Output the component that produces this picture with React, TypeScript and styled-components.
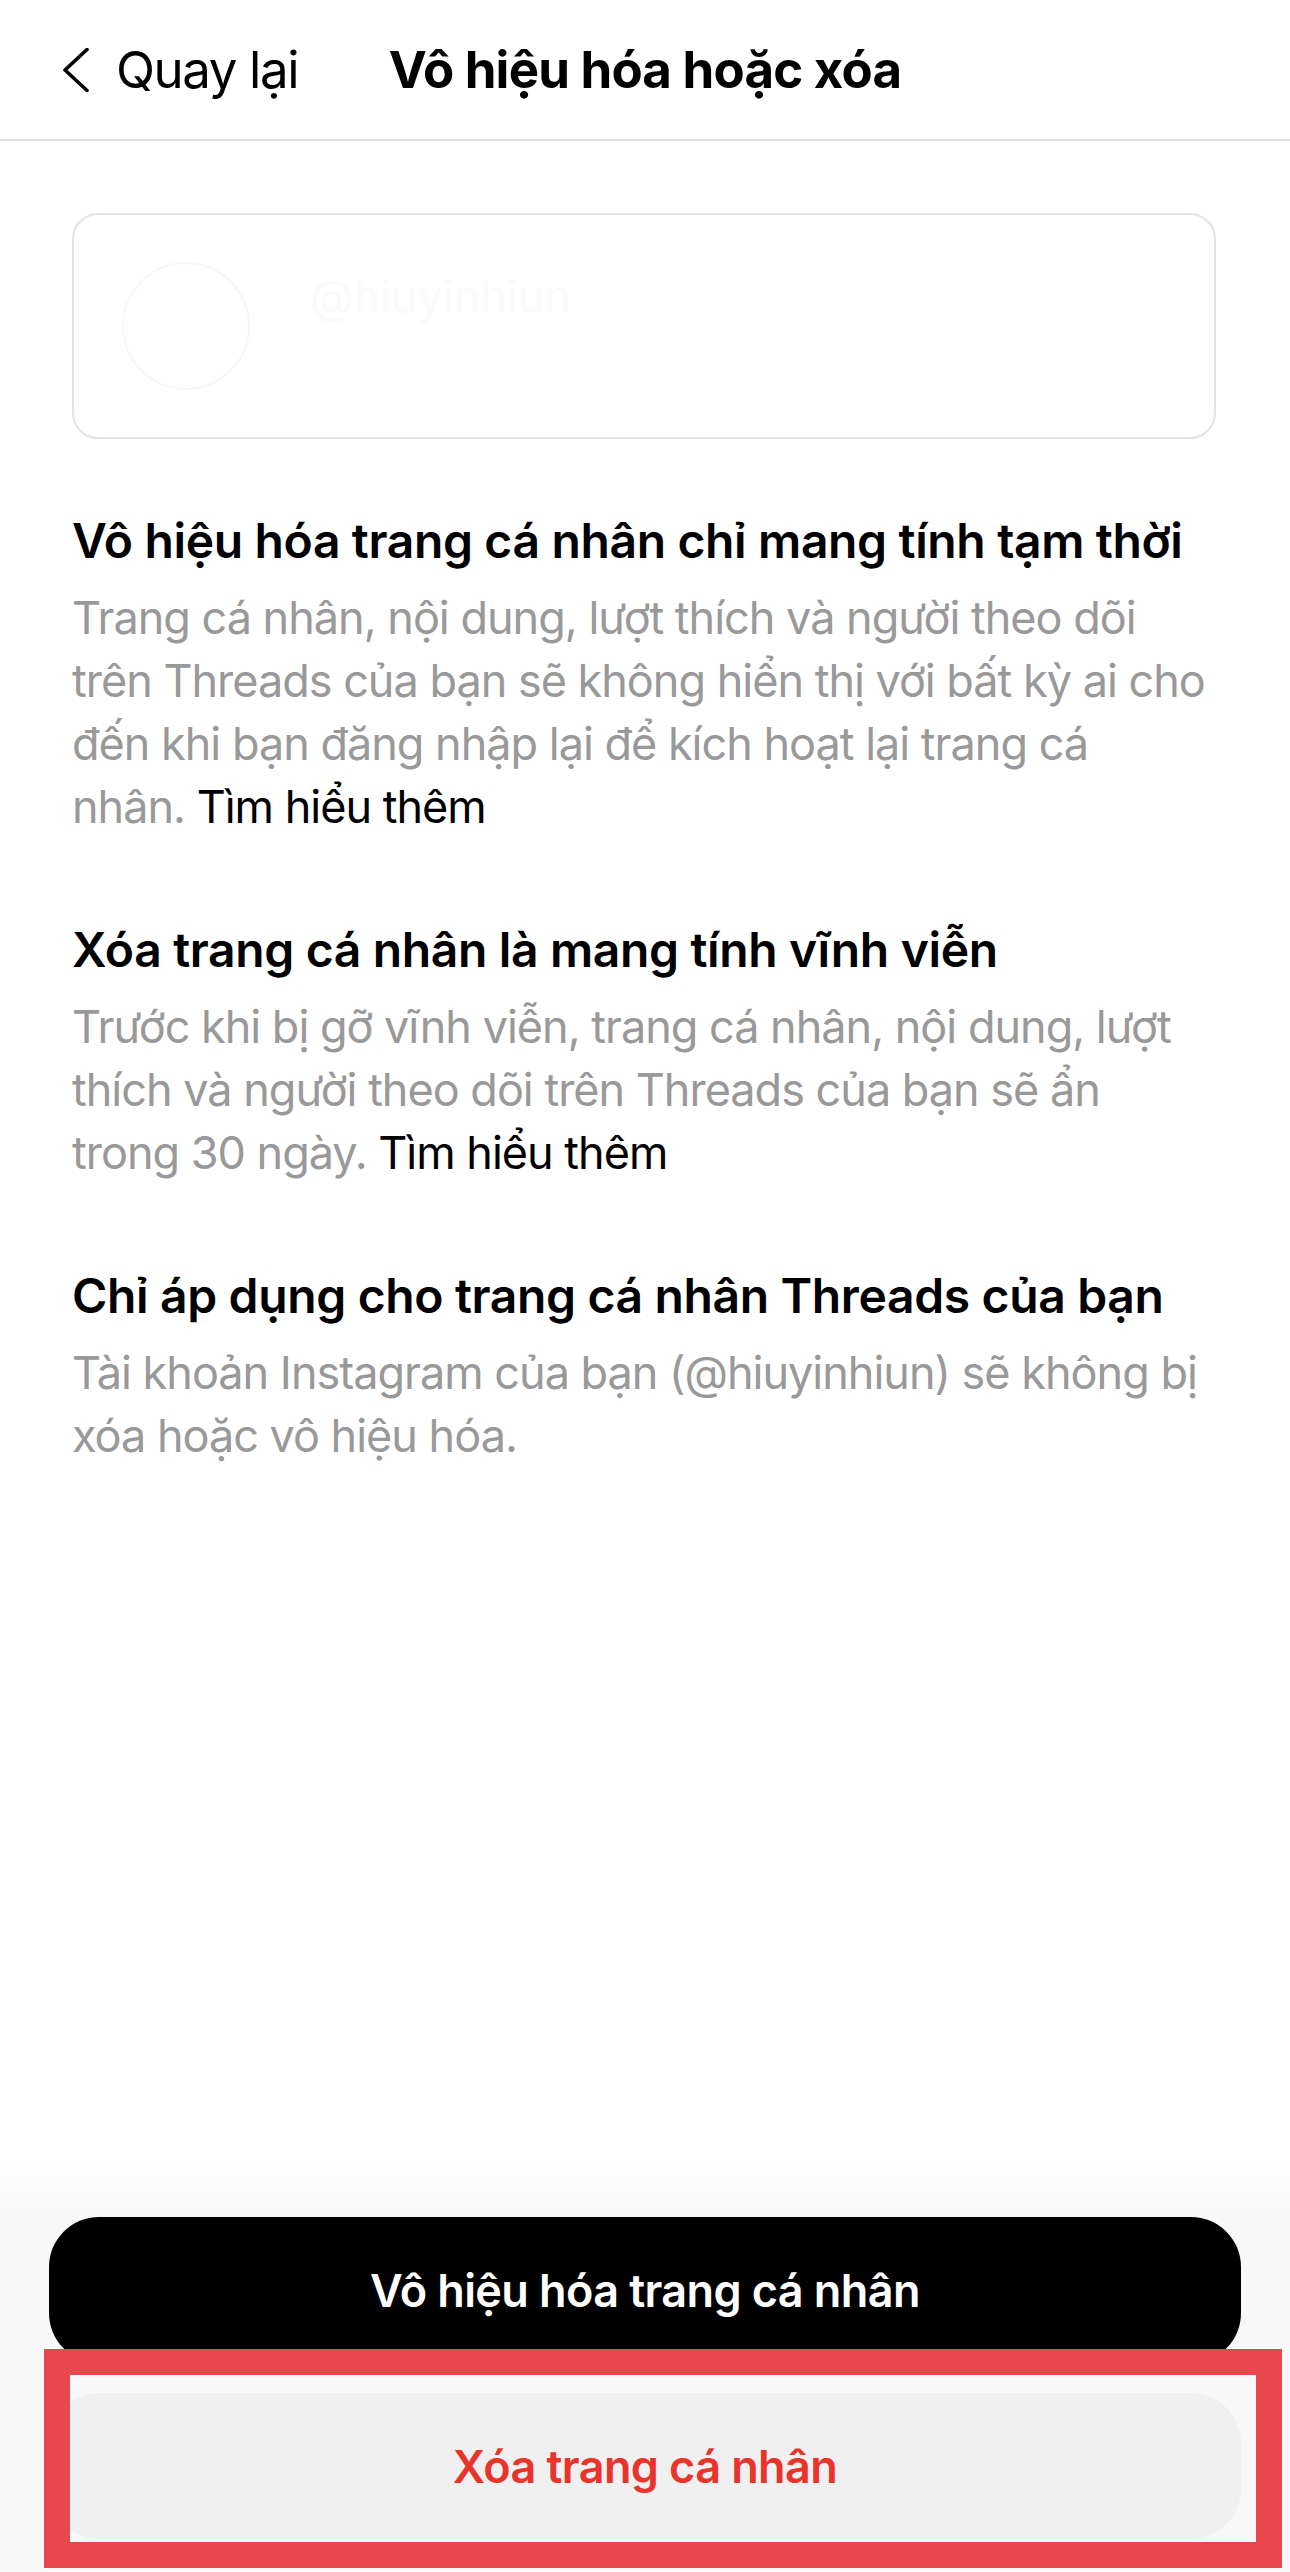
import styled, { createGlobalStyle } from 'styled-components'

const GlobalStyle = createGlobalStyle`
    html, body {
        margin: 0;
        padding: 0;
        background-color: #ffffff;
    }
    body {
        font-family: Inter, "Noto Sans", "Liberation Sans", sans-serif;
        -webkit-font-smoothing: antialiased;
    }
    * {
        box-sizing: border-box;
    }
`

const Page = styled.div`
    display: flex;
    flex-direction: column;
    min-height: 100vh;
    width: 100%;
    background-color: #ffffff;
`

const Header = styled.header`
    display: grid;
    grid-template-columns: 1fr auto 1fr;
    align-items: center;
    height: 141px;
    padding: 0 63px;
    border-bottom: 2px solid #dedede;
`

const BackButton = styled.div`
    display: flex;
    align-items: center;
    gap: 27px;
    font-size: 51px;
    color: #000000;
    letter-spacing: -1.4px;
`

const Title = styled.h1`
    margin: 0;
    font-size: 51px;
    font-weight: 700;
    color: #000000;
    letter-spacing: -0.8px;
`

const Card = styled.div`
    display: flex;
    align-items: center;
    gap: 60px;
    height: 226px;
    margin: 72px 74px 0 72px;
    padding: 0 48px;
    border: 2px solid #e3e3e3;
    border-radius: 26px;
`

const Avatar = styled.div`
    width: 128px;
    height: 128px;
    border-radius: 50%;
    border: 2px solid #f7f7f7;
    background-color: #fefefe;
`

const Handle = styled.span`
    font-size: 45px;
    color: #fafafa;
    margin-bottom: 60px;
`

const Sections = styled.div`
    display: flex;
    flex-direction: column;
    gap: 80px;
    padding: 70px 72px 0 72px;
`

const Section = styled.section`
    display: flex;
    flex-direction: column;
    gap: 14px;
`

const SectionTitle = styled.h2`
    margin: 0;
    font-size: 48px;
    line-height: 63px;
    font-weight: 600;
    color: #000000;
    letter-spacing: -0.35px;
    white-space: nowrap;
`

const SectionText = styled.p`
    margin: 0;
    font-size: 45px;
    line-height: 63px;
    color: #999999;
    letter-spacing: -1px;
`

const Line = styled.span`
    display: block;
    white-space: nowrap;
`

const Link = styled.span`
    color: #000000;
`

const Footer = styled.footer`
    display: flex;
    flex-direction: column;
    gap: 30px;
    margin-top: auto;
    padding: 70px 49px 33px 49px;
    background: linear-gradient(180deg, rgba(248, 248, 248, 0) 0, #f8f8f8 70px);
`

const ActionButton = styled.button<{ variant: 'primary' | 'danger' }>`
    display: flex;
    align-items: center;
    justify-content: center;
    width: 100%;
    height: 146px;
    border: none;
    border-radius: 50px;
    font-family: inherit;
    font-size: 45px;
    font-weight: 600;
    letter-spacing: -0.6px;
    background-color: ${props => (props.variant === 'primary' ? '#000000' : '#f0f0f0')};
    color: ${props => (props.variant === 'primary' ? '#ffffff' : '#e8342a')};
`

const Highlighted = styled.div`
    position: relative;
`

const Annotation = styled.div`
    position: absolute;
    top: -44px;
    left: -5px;
    right: -41px;
    bottom: -29px;
    border: 26px solid #e8474c;
    pointer-events: none;
`

function ChevronLeft() {
    return (
        <svg width="26" height="44" viewBox="0 0 26 44" fill="none">
            <polyline points="24,1.5 2,22 24,42.5" stroke="#000000" strokeWidth="3.6" strokeLinecap="round" strokeLinejoin="round" />
        </svg>
    )
}

const sections = [
    {
        title: 'Vô hiệu hóa trang cá nhân chỉ mang tính tạm thời',
        lines: [
            'Trang cá nhân, nội dung, lượt thích và người theo dõi',
            'trên Threads của bạn sẽ không hiển thị với bất kỳ ai cho',
            'đến khi bạn đăng nhập lại để kích hoạt lại trang cá',
            'nhân.',
        ],
        link: true,
    },
    {
        title: 'Xóa trang cá nhân là mang tính vĩnh viễn',
        lines: [
            'Trước khi bị gỡ vĩnh viễn, trang cá nhân, nội dung, lượt',
            'thích và người theo dõi trên Threads của bạn sẽ ẩn',
            'trong 30 ngày.',
        ],
        link: true,
    },
    {
        title: 'Chỉ áp dụng cho trang cá nhân Threads của bạn',
        lines: [
            'Tài khoản Instagram của bạn (@hiuyinhiun) sẽ không bị',
            'xóa hoặc vô hiệu hóa.',
        ],
        link: false,
    },
]

export default function App() {
    return (
        <Page>
            <GlobalStyle />
            <Header>
                <BackButton>
                    <ChevronLeft />
                    Quay lại
                </BackButton>
                <Title>Vô hiệu hóa hoặc xóa</Title>
                <div />
            </Header>
            <Card>
                <Avatar />
                <Handle>@hiuyinhiun</Handle>
            </Card>
            <Sections>
                {sections.map(s => (
                    <Section key={s.title}>
                        <SectionTitle>{s.title}</SectionTitle>
                        <SectionText>
                            {s.lines.map((line, i) => (
                                <Line key={i}>
                                    {line}
                                    {s.link && i === s.lines.length - 1 && <Link> Tìm hiểu thêm</Link>}
                                </Line>
                            ))}
                        </SectionText>
                    </Section>
                ))}
            </Sections>
            <Footer>
                <ActionButton variant="primary">Vô hiệu hóa trang cá nhân</ActionButton>
                <Highlighted>
                    <ActionButton variant="danger">Xóa trang cá nhân</ActionButton>
                    <Annotation />
                </Highlighted>
            </Footer>
        </Page>
    )
}
